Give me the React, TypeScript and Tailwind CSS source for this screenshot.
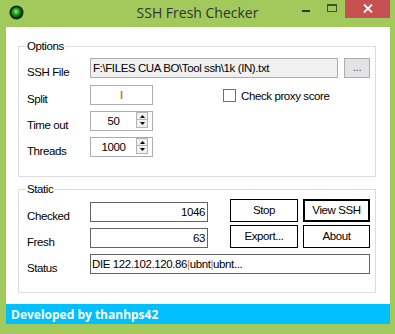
import React from "react"

function TitleBar() {
  return (
    <div className="h-[27px] grid grid-cols-[1fr_auto_1fr] items-start">
      <div className="pl-[9px] pt-[5px]">
        <svg width="15" height="15" viewBox="0 0 15 15">
          <defs>
            <radialGradient id="orb" cx="0.45" cy="0.42" r="0.6">
              <stop offset="0" stopColor="#8dff6a" />
              <stop offset="0.45" stopColor="#1ea81e" />
              <stop offset="1" stopColor="#0b3a0b" />
            </radialGradient>
          </defs>
          <circle cx="7.5" cy="7.5" r="7" fill="#142a10" />
          <circle cx="7.5" cy="7.5" r="5.3" fill="url(#orb)" />
        </svg>
      </div>
      <span className="font-['Open_Sans',sans-serif] text-[14px] leading-[26px] text-[#333]">SSH Fresh Checker</span>
      <div className="flex justify-end pr-[5px]">
        <div className="w-[26px] h-[18px] flex justify-center">
          <div className="mt-[10px] w-[8px] h-[2px] bg-[#2c381c]" />
        </div>
        <div className="w-[26px] h-[18px] flex justify-center">
          <div className="mt-[4px] w-[10px] h-[8px] border border-t-2 border-[#42532a]" />
        </div>
        <div className="w-[45px] h-[18px] bg-[#c75050] flex justify-center pt-[4px]">
          <svg width="10" height="9" viewBox="0 0 10 9">
            <path d="M1 0.5 L9 8.5 M9 0.5 L1 8.5" stroke="#fff" strokeWidth="1.8" />
          </svg>
        </div>
      </div>
    </div>
  )
}

function GroupBox({ title, className, children }: { title: string; className: string; children: React.ReactNode }) {
  return (
    <div className={`relative ml-[12px] w-[358px] border border-[#dcdcdc] pl-[8px] ${className}`}>
      <span className="absolute left-[7px] top-[-8px] bg-white px-[1px] leading-[14px]">{title}</span>
      {children}
    </div>
  )
}

function Label({ text, top }: { text: string; top: string }) {
  return <span className={`w-[63px] shrink-0 leading-[14px] ${top}`}>{text}</span>
}

function NumberBox({ value }: { value: string }) {
  return (
    <div className="w-[63px] h-[20px] border border-[#abadb3] flex">
      <span className="flex-1 text-center leading-[18px]">{value}</span>
      <div className="w-[12px] mr-[4px] flex flex-col">
        <div className="h-[8px] border border-[#b4b4b4] bg-[#f0f0f0] flex items-center justify-center">
          <svg width="5" height="3" viewBox="0 0 5 3">
            <path d="M0 3 L2.5 0 L5 3 Z" fill="#000" />
          </svg>
        </div>
        <div className="h-[8px] border border-t-0 border-[#b4b4b4] bg-[#f0f0f0] flex items-center justify-center">
          <svg width="5" height="3" viewBox="0 0 5 3">
            <path d="M0 0 L5 0 L2.5 3 Z" fill="#000" />
          </svg>
        </div>
      </div>
    </div>
  )
}

function Button({ text, wide, bold }: { text: string; wide: string; bold?: boolean }) {
  return (
    <div
      className={`h-[23px] ${wide} bg-white flex items-center justify-center ${
        bold ? "border-2 border-black" : "border border-black"
      }`}
    >
      {text}
    </div>
  )
}

export default function App() {
  return (
    <div className="w-[395px] h-[334px] bg-[#a2c95b] flex flex-col overflow-hidden">
      <TitleBar />
      <div className="ml-[6px] w-[384px] h-[297px] bg-white flex flex-col font-['Liberation_Sans',Arial,sans-serif] text-[11.5px] tracking-[-0.4px] text-black">
        <GroupBox title="Options" className="mt-[19px] h-[131px] pt-[11px]">
          <div className="flex h-[20px]">
            <Label text="SSH File" top="pt-[7px]" />
            <div className="w-[248px] h-[20px] bg-[#f0f0f0] border border-[#acacac] pl-[2px] leading-[18px] whitespace-nowrap overflow-hidden">
              F:\FILES CUA BO\Tool ssh\1k (IN).txt
            </div>
            <div className="ml-[6px] w-[26px] h-[20px] border border-[#adadad] bg-[#e3e3e3] flex justify-center leading-[16px] text-[#5a2a6a]">
              ...
            </div>
          </div>
          <div className="flex h-[20px] mt-[7px]">
            <Label text="Split" top="pt-[7px]" />
            <div className="w-[63px] h-[20px] border border-[#abadb3] text-center leading-[18px] font-bold text-[#d27a28]">l</div>
            <div className="ml-[70px] mt-[4px] w-[13px] h-[13px] border border-[#707070] bg-white" />
            <span className="ml-[5px] pt-[4px] leading-[14px]">Check proxy score</span>
          </div>
          <div className="flex h-[20px] mt-[6px]">
            <Label text="Time out" top="pt-[7px]" />
            <NumberBox value="50" />
          </div>
          <div className="flex h-[20px] mt-[6px]">
            <Label text="Threads" top="pt-[7px]" />
            <NumberBox value="1000" />
          </div>
        </GroupBox>

        <GroupBox title="Static" className="mt-[12px] h-[104px] pt-[9px]">
          <div className="flex items-end h-[23px]">
            <Label text="Checked" top="self-start pt-[10px]" />
            <div className="w-[118px] h-[20px] border border-[#646464] text-right pr-[2px] leading-[18px]">1046</div>
            <div className="ml-[22px]">
              <Button text="Stop" wide="w-[68px]" />
            </div>
            <div className="ml-[5px]">
              <Button text="View SSH" wide="w-[67px]" bold />
            </div>
          </div>
          <div className="flex items-end h-[23px] mt-[3px]">
            <Label text="Fresh" top="self-start pt-[10px]" />
            <div className="w-[118px] h-[20px] border border-[#646464] text-right pr-[2px] leading-[18px]">63</div>
            <div className="ml-[22px]">
              <Button text="Export..." wide="w-[68px]" />
            </div>
            <div className="ml-[5px]">
              <Button text="About" wide="w-[67px]" />
            </div>
          </div>
          <div className="flex h-[20px] mt-[6px]">
            <Label text="Status" top="pt-[7px]" />
            <div className="w-[280px] h-[20px] border border-[#646464] pl-[1px] leading-[18px] whitespace-nowrap overflow-hidden">
              DIE 122.102.120.86<span className="text-[#c47a2c]">|</span>ubnt<span className="text-[#c47a2c]">|</span>ubnt...
            </div>
          </div>
        </GroupBox>

        <div className="mt-[11px] h-[20px] bg-[#00bfff] pl-[5px] font-['Open_Sans',sans-serif] font-bold text-[12px] tracking-normal text-white leading-[21px]">
          Developed by thanhps42
        </div>
      </div>
    </div>
  )
}
